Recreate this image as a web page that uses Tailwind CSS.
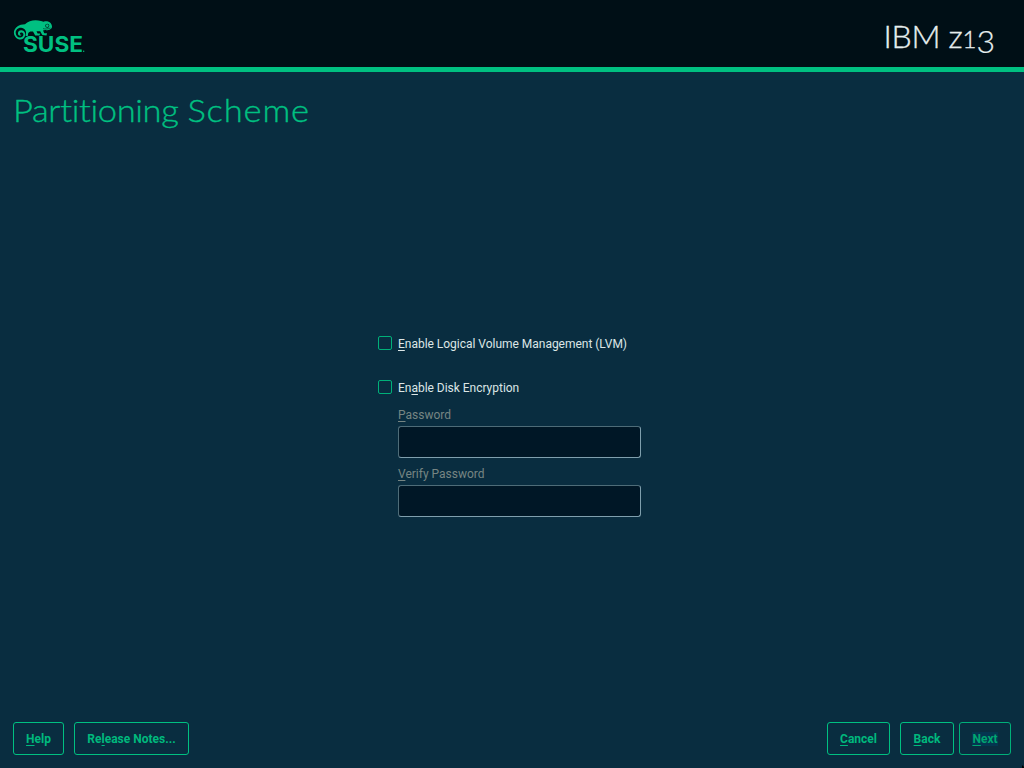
<!DOCTYPE html>
<html lang="en">
<head>
<meta charset="utf-8">
<title>Partitioning Scheme</title>
<script src="https://cdn.jsdelivr.net/npm/@tailwindcss/browser@4"></script>
<style>u{text-decoration:underline;text-decoration-thickness:1px;text-underline-offset:2px;text-decoration-skip-ink:none}</style>
</head>
<body class="relative flex h-screen w-screen flex-col overflow-hidden bg-[#092d40] font-['Roboto',sans-serif] text-xs leading-4 text-[#dce6e6]">
  <header class="flex h-[72px] shrink-0 justify-between border-b-5 border-[#00c081] bg-[#000f16] pl-3 pr-[29px]">
    <svg class="mt-[18px] h-[42px] w-[74px] overflow-visible" viewBox="12 18 74 42" fill="#00c081">
      <path d="M25 24.2C29 20.3 35 19.2 41 20.9L43.7 21.7C47 20.4 51.8 22.2 52 26.4C52 29.3 48.5 30.5 45 30.1L43 30.4L44.3 33.2H47L46.5 35.6L42.3 35L40.2 31.3L36.5 31.2L37.6 33.6H40.2L39.5 35.5H35.2L33 31.5C30.6 31.2 29 31.4 28.2 33.2L27.8 36H25.7L26 32.7C26.2 30.7 24.8 28.2 21.1 27.7C17.7 27.6 15.5 30.1 15.7 33.1C15.9 35.8 17.8 37.8 20.4 37.6C22.8 37.4 24 35.3 23.2 33.6C22.5 31.9 20 32.1 20 33.7C20 34.7 20.8 35 21.5 34.7C20.9 36.2 18.4 36 18 34C17.6 31.6 19.4 30 21.6 30.3C24.2 30.6 25.8 33.1 25.1 35.8C24.4 38.6 21.8 40 19.2 39.4C16 38.7 13.8 35.8 13.9 32.3C14.1 27.7 19.2 24.2 25 24.2Z"/>
      <circle cx="47.3" cy="25.7" r="2" fill="#000f16"/>
      <circle cx="47.3" cy="25.7" r="1.4"/>
      <path d="M43 28.6C45.5 29.4 48 28.9 50.5 28" fill="none" stroke="#000f16" stroke-width=".5"/>
      <text x="23" y="52.3" textLength="60" lengthAdjust="spacingAndGlyphs" font-family="Inter" font-weight="700" font-size="21">SUSE</text>
      <circle cx="83.7" cy="51.2" r=".7"/>
    </svg>
    <div class="mt-4 flex h-10 items-baseline whitespace-pre font-['Lato',sans-serif] text-[32px] leading-10 font-light text-[#e6eeee] [-webkit-text-stroke:0.35px_#e6eeee]"><span class="tracking-[-0.3px]">IBM z</span><span class="text-2xl leading-10">1</span><span class="relative top-[5px] [-webkit-text-stroke:0.2px_#e6eeee]">3</span></div>
  </header>
  <h1 class="mt-[18px] mb-px ml-[13px] h-10 w-max shrink-0 origin-left scale-x-[1.078] font-['Lato',sans-serif] text-[32px] leading-10 font-light text-[#00c081] [font-variant-ligatures:none] [-webkit-text-stroke:0.35px_#00c081]"><span class="tracking-[-0.33px]">Partitioning </span><span class="tracking-[0.8px]">Scheme</span></h1>
  <main class="flex flex-1 justify-center pt-[205px]">
    <form class="mr-[5px] w-[263px]">
      <label class="flex h-4 items-start gap-1.5"><span class="size-3.5 rounded-xs border border-[#00b079]"></span><span class="tracking-[-0.02px]"><u>E</u>nable Logical Volume Management (LVM)</span></label>
      <label class="mt-7 flex h-4 items-start gap-1.5"><span class="size-3.5 rounded-xs border border-[#00b079]"></span><span class="tracking-[-0.02px]">En<u>a</u>ble Disk Encryption</span></label>
      <div class="mt-[11px] ml-5 flex flex-col text-[#768583]">
        <span><u>P</u>assword</span>
        <span class="mt-[3px] h-8 rounded-[3px] border border-t-[#4e6c78] border-l-[#4e6c78] border-r-[#7f9fad] border-b-[#7f9fad] bg-[#001726]"></span>
        <span class="mt-2"><u>V</u>erify Password</span>
        <span class="mt-[3px] h-8 rounded-[3px] border border-t-[#4e6c78] border-l-[#4e6c78] border-r-[#7f9fad] border-b-[#7f9fad] bg-[#001726]"></span>
      </div>
    </form>
  </main>
  <footer class="mx-[13px] mb-[13px] flex h-[33px] shrink-0 text-center font-bold text-[#00b97d]">
    <button class="w-[51px] rounded-[3px] border border-[#00c081]"><u>H</u>elp</button>
    <button class="ml-2.5 w-[115px] rounded-[3px] border border-[#00c081]">Re<u>l</u>ease Notes...</button>
    <button class="ml-auto w-[63px] rounded-[3px] border border-[#00c081]"><u>C</u>ancel</button>
    <button class="ml-2.5 w-[54px] rounded-[3px] border border-[#00c081]"><u>B</u>ack</button>
    <button class="ml-[5px] w-[52px] rounded-[3px] border border-[#00b079] text-[#00a571]"><span class="bg-[#043650]"><u>N</u>ext</span></button>
  </footer>
  <svg class="absolute right-0 bottom-0 size-[3px]" viewBox="0 0 3 3"><path d="M1 0L3 2V3H1Z"/></svg>
</body>
</html>
